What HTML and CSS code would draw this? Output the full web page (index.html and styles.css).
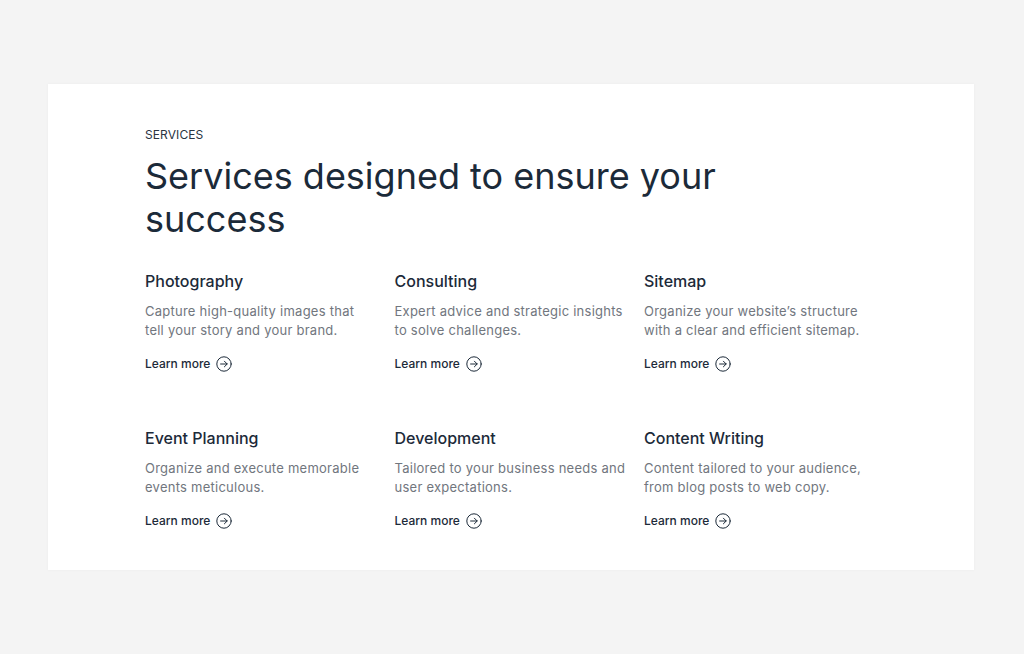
FILE: index.html
```html
<!DOCTYPE html>
<html lang="en">
<head>
<meta charset="utf-8">
<title>Services</title>
<link rel="stylesheet" href="styles.css">
</head>
<body>
<section class="card">
  <p class="eyebrow">SERVICES</p>
  <h1 class="heading">Services designed to ensure your<br>success</h1>
  <div class="grid">
    <article class="item">
      <h2 class="title">Photography</h2>
      <p class="desc">Capture high-quality images that<br>tell your story and your brand.</p>
      <a class="more" href="#">Learn more <svg class="icon" viewBox="0 0 16 16"><circle cx="8" cy="8" r="7.2"/><path d="M4.6 8h6.6M8.4 5.2 11.2 8l-2.8 2.8"/></svg></a>
    </article>
    <article class="item">
      <h2 class="title">Consulting</h2>
      <p class="desc">Expert advice and strategic insights to solve challenges.</p>
      <a class="more" href="#">Learn more <svg class="icon" viewBox="0 0 16 16"><circle cx="8" cy="8" r="7.2"/><path d="M4.6 8h6.6M8.4 5.2 11.2 8l-2.8 2.8"/></svg></a>
    </article>
    <article class="item">
      <h2 class="title">Sitemap</h2>
      <p class="desc">Organize your website’s structure with a clear and efficient sitemap.</p>
      <a class="more" href="#">Learn more <svg class="icon" viewBox="0 0 16 16"><circle cx="8" cy="8" r="7.2"/><path d="M4.6 8h6.6M8.4 5.2 11.2 8l-2.8 2.8"/></svg></a>
    </article>
    <article class="item">
      <h2 class="title">Event Planning</h2>
      <p class="desc">Organize and execute memorable events meticulous.</p>
      <a class="more" href="#">Learn more <svg class="icon" viewBox="0 0 16 16"><circle cx="8" cy="8" r="7.2"/><path d="M4.6 8h6.6M8.4 5.2 11.2 8l-2.8 2.8"/></svg></a>
    </article>
    <article class="item">
      <h2 class="title">Development</h2>
      <p class="desc">Tailored to your business needs and user expectations.</p>
      <a class="more" href="#">Learn more <svg class="icon" viewBox="0 0 16 16"><circle cx="8" cy="8" r="7.2"/><path d="M4.6 8h6.6M8.4 5.2 11.2 8l-2.8 2.8"/></svg></a>
    </article>
    <article class="item">
      <h2 class="title">Content Writing</h2>
      <p class="desc">Content tailored to your audience, from blog posts to web copy.</p>
      <a class="more" href="#">Learn more <svg class="icon" viewBox="0 0 16 16"><circle cx="8" cy="8" r="7.2"/><path d="M4.6 8h6.6M8.4 5.2 11.2 8l-2.8 2.8"/></svg></a>
    </article>
  </div>
</section>
</body>
</html>
```

FILE: styles.css
```css
* { box-sizing: border-box; }
html, body { margin: 0; }
body {
  background: #f4f4f4;
  padding: 84px 50px 84px 48px;
  font-family: "Inter", "Open Sans", sans-serif;
  color: #1c2a39;
}
.card {
  background: #ffffff;
  box-shadow: 0 0 3px rgba(0,0,0,0.04);
  padding: 42px 97px 42px 97px;
  height: 486px;
}
.eyebrow {
  margin: 0;
  font-size: 12px;
  line-height: 18px;
  color: #2a3542;
  letter-spacing: 0.1px;
}
.heading {
  margin: 11px 0 0;
  font-size: 36px;
  line-height: 43px;
  font-weight: 400;
  color: #1b2a39;
  letter-spacing: 0;
}
.grid {
  margin-top: 28px;
  display: grid;
  grid-template-columns: repeat(3, 234px);
  column-gap: 15.5px;
  row-gap: 53px;
}
.item { display: flex; flex-direction: column; align-items: flex-start; }
.title {
  margin: 0;
  font-size: 16px;
  line-height: 24px;
  font-weight: 500;
  color: #1c2a39;
}
.desc {
  margin: 9px 0 0;
  font-size: 13px;
  line-height: 19px;
  color: #71767e;
  letter-spacing: 0.25px;
}
.more {
  margin-top: 15px;
  display: inline-flex;
  align-items: center;
  gap: 6px;
  font-size: 12px;
  line-height: 18px;
  font-weight: 500;
  color: #1c2a39;
  text-decoration: none;
}
.icon {
  width: 16px;
  height: 16px;
  fill: none;
  stroke: #1c2a39;
  stroke-width: 1;
  stroke-linecap: round;
  stroke-linejoin: round;
}
```
